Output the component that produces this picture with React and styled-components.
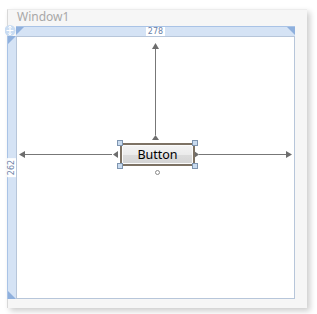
import React from "react";
import styled, { createGlobalStyle } from "styled-components";

const Global = createGlobalStyle`
  html, body { margin: 0; padding: 0; background: #ffffff; }
  body { font-family: "Noto Sans", "Open Sans", sans-serif; }
`;

const Page = styled.div`
  width: 317px;
  height: 314px;
  padding: 9px 0 0 7px;
  box-sizing: border-box;
`;

const Window = styled.div`
  width: 299px;
  height: 298px;
  background: #f6f6f6;
  border-left: 1px solid #d8d8d8;
  border-top: 1px solid #ececec;
  box-shadow: 3px 3px 6px rgba(0, 0, 0, 0.2);
  display: flex;
  flex-direction: column;
`;

const Title = styled.div`
  height: 16px;
  padding-left: 9px;
  font-size: 12px;
  line-height: 14px;
  color: #a8a8a8;
  font-family: "Noto Sans", sans-serif;
`;

const Designer = styled.div`
  display: grid;
  grid-template-columns: 9px 280px;
  grid-template-rows: 10px 263px;
  margin-left: -1px;
`;

const Corner = styled.div`
  display: flex;
  align-items: flex-end;
  overflow: visible;
`;

const MoveHandle = styled.svg`
  display: block;
  flex: none;
  margin-left: -2px;
  margin-bottom: -1px;
`;

const HRuler = styled.div`
  width: 279px;
  height: 9px;
  background: #d5e3f5;
  border-top: 1px solid #a9c3e6;
  display: flex;
  justify-content: space-between;
  align-items: center;
`;

const VRuler = styled.div`
  width: 9px;
  height: 263px;
  background: #d5e3f5;
  border-left: 1px solid #a9c3e6;
  box-sizing: border-box;
  display: flex;
  flex-direction: column;
  align-items: center;
  justify-content: space-between;
`;

const Measure = styled.span`
  flex: none;
  background: #ffffff;
  color: #6b7fa8;
  font-size: 8px;
  line-height: 9px;
  padding: 0 2px;
  white-space: nowrap;
  font-family: "DejaVu Sans", sans-serif;
  ${(p) => (p.$vertical ? "transform: rotate(-90deg);" : "")}
`;

const CornerTri = styled.svg`
  display: block;
  flex: none;
  align-self: flex-start;
`;

const Canvas = styled.div`
  position: relative;
  width: 279px;
  height: 263px;
  box-sizing: border-box;
  background: #ffffff;
  border: 1px solid #b7c6da;
`;

const Lines = styled.svg`
  position: absolute;
  left: -1px;
  top: -1px;
`;

const Selection = styled.div`
  position: absolute;
  left: 100px;
  top: 103px;
  display: grid;
  grid-template-columns: 3px 3px 69px 3px 3px;
  grid-template-rows: 3px 3px 17px 3px 3px 6px;
`;

const DesignButton = styled.div`
  grid-column: 2 / 5;
  grid-row: 2 / 5;
  box-sizing: border-box;
  border: 2px solid #7d7264;
  border-radius: 3px;
  background: linear-gradient(#f4f4f4 0%, #ebebeb 50%, #dcdcdc 51%, #d4d4d4 100%);
  box-shadow: inset 0 0 0 1px #fbfbfb;
  display: flex;
  align-items: center;
  justify-content: center;
  font-family: "Noto Sans", sans-serif;
  font-size: 12.5px;
  color: #000;
`;

const Handle = styled.div`
  grid-column: ${(p) => p.$col};
  grid-row: ${(p) => p.$row};
  z-index: 1;
  box-sizing: border-box;
  width: 6px;
  height: 6px;
  background: #c9dbef;
  border: 1px solid #7f95b0;
`;

const Anchor = styled.div`
  grid-column: 1 / -1;
  grid-row: 6;
  justify-self: center;
  align-self: center;
  box-sizing: border-box;
  width: 5px;
  height: 5px;
  border: 1px solid #8a8a8a;
  border-radius: 50%;
  background: #fff;
`;

export default function App() {
  return (
    <>
      <Global />
      <Page>
        <Window>
          <Title>Window1</Title>
          <Designer>
            <Corner>
              <MoveHandle width="11" height="13" viewBox="0 0 11 13">
                <circle cx="5" cy="6.5" r="5.5" fill="#c9dcf2" />
                <path d="M5 2v9M1.5 6.5h7" stroke="#ffffff" strokeWidth="1.2" />
                <path d="M3.5 3.6 5 2 6.5 3.6M3.5 9.4 5 11 6.5 9.4" fill="none" stroke="#fff" strokeWidth="1" />
              </MoveHandle>
            </Corner>
            <HRuler>
              <CornerTri width="8" height="8" viewBox="0 0 8 8">
                <polygon points="0,0 8,0 0,8" fill="#8fb0dd" />
              </CornerTri>
              <Measure>278</Measure>
              <CornerTri width="8" height="8" viewBox="0 0 8 8">
                <polygon points="0,0 8,0 8,8" fill="#8fb0dd" />
              </CornerTri>
            </HRuler>
            <VRuler>
              <CornerTri width="8" height="8" viewBox="0 0 8 8">
                <polygon points="0,0 8,0 0,8" fill="#8fb0dd" />
              </CornerTri>
              <Measure $vertical>262</Measure>
              <CornerTri width="8" height="8" viewBox="0 0 8 8">
                <polygon points="0,0 8,8 0,8" fill="#8fb0dd" />
              </CornerTri>
            </VRuler>
            <Canvas>
              <Lines width="280" height="263" viewBox="0 0 280 263">
                <g stroke="#777" strokeWidth="1">
                  <line x1="139.5" y1="12" x2="139.5" y2="99" />
                  <line x1="8" y1="118.5" x2="96" y2="118.5" />
                  <line x1="183" y1="118.5" x2="272" y2="118.5" />
                </g>
                <g fill="#6d6d6d">
                  <polygon points="139.5,7 136,13 143,13" />
                  <polygon points="139.5,99 136,104 143,104" />
                  <polygon points="3,118.5 9,115 9,122" />
                  <polygon points="97,118.5 102,115 102,122" />
                  <polygon points="276,118.5 270,115 270,122" />
                  <polygon points="183,118.5 178,115 178,122" />
                </g>
              </Lines>
              <Selection>
                <DesignButton>Button</DesignButton>
                <Handle $col="1 / 3" $row="1 / 3" />
                <Handle $col="4 / 6" $row="1 / 3" />
                <Handle $col="1 / 3" $row="4 / 6" />
                <Handle $col="4 / 6" $row="4 / 6" />
                <Anchor />
              </Selection>
            </Canvas>
          </Designer>
        </Window>
      </Page>
    </>
  );
}
